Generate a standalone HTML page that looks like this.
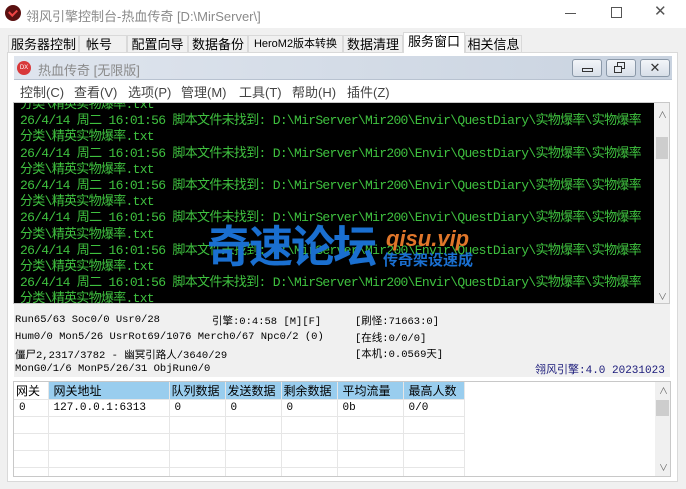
<!DOCTYPE html>
<html><head><meta charset="utf-8"><style>
*{margin:0;padding:0;box-sizing:border-box}
body{width:686px;height:489px;background:#f0f0f0;font-family:"Liberation Sans","Noto Sans CJK SC",sans-serif;position:relative;overflow:hidden}
.a{position:absolute}
.title{left:0;top:0;width:686px;height:28px;background:#fff}
.tab{position:absolute;top:35px;height:18px;border:1px solid #d9d9d9;border-bottom:none;background:#f0f0f0;font-size:13px;line-height:17px;text-align:center;color:#000}
.mono{font-family:"Liberation Mono","Noto Sans CJK SC",monospace}
.con{left:14px;top:103px;width:640px;height:200px;background:#000;overflow:hidden}
.con div{font-size:13px;line-height:16.2px;color:#3fc13f;white-space:nowrap;padding-left:6px;font-family:"Liberation Mono","Noto Sans CJK SC",monospace;letter-spacing:-0.7px}
.st{font-size:10.5px;color:#000;font-family:"Liberation Mono","Noto Sans CJK SC",monospace;white-space:nowrap}
table{border-collapse:collapse;font-size:11px}
td{border-right:1px solid #e6e6e6;border-bottom:1px solid #e6e6e6;height:17px;padding-left:5px;white-space:nowrap}
.btn{position:absolute;top:59px;width:30px;height:18px;border:1px solid #8a98a8;border-radius:3px;background:linear-gradient(#f2f5f9,#d8dfe8)}
.m{position:absolute;top:82px;font-size:13px;color:#444;white-space:nowrap}
</style></head><body>
<div class="a title"></div>
<div class="a" style="left:5px;top:5px;width:16px;height:16px;border-radius:50%;background:#5a1010"></div>
<div class="a" style="left:9px;top:9px;width:8px;height:6px;border-left:2px solid #e44;border-bottom:2px solid #e44;transform:rotate(-45deg)"></div>
<div class="a" style="left:26px;top:6px;font-size:13px;color:#8a8a8a">翎风引擎控制台-热血传奇 [D:\MirServer\]</div>
<div class="a" style="left:565px;top:13px;width:11px;height:1px;background:#555"></div>
<div class="a" style="left:611px;top:7px;width:11px;height:11px;border:1px solid #555"></div>
<div class="a" style="left:654px;top:2px;font-size:15px;color:#555">✕</div>

<div class="tab" style="left:8px;width:71px">服务器控制</div>
<div class="tab" style="left:79px;width:48px;text-align:left;padding-left:6px">帐号</div>
<div class="tab" style="left:127px;width:61px">配置向导</div>
<div class="tab" style="left:188px;width:60px">数据备份</div>
<div class="tab" style="left:248px;width:95px;font-size:11px">HeroM2版本转换</div>
<div class="tab" style="left:343px;width:60px">数据清理</div>
<div class="tab" style="left:403px;width:62px;top:32px;height:21px;background:#fff;z-index:2">服务窗口</div>
<div class="tab" style="left:465px;width:57px">相关信息</div>

<div class="a" style="left:7px;top:52px;width:671px;height:430px;background:#fff;border:1px solid #d9d9d9"></div>
<div class="a" style="left:14px;top:56px;width:658px;height:24px;background:linear-gradient(90deg,#dfe5ee,#c9d3e0);border-bottom:1px solid #b8c2d0"></div>
<div class="a" style="left:17px;top:61px;width:14px;height:14px;border-radius:50%;background:#d8383a;color:#fff;font-size:6px;line-height:14px;text-align:center">DX</div>
<div class="a" style="left:38px;top:60px;font-size:13px;color:#8a8a8a">热血传奇 [无限版]</div>
<div class="btn" style="left:572px"><div class="a" style="left:9px;top:8px;width:11px;height:4px;border:1px solid #333"></div></div>
<div class="btn" style="left:606px"><div class="a" style="left:10px;top:2px;width:8px;height:7px;border:1px solid #333"></div><div class="a" style="left:7px;top:6px;width:8px;height:7px;border:1px solid #333;background:#e8ecf2"></div></div>
<div class="btn" style="left:640px;font-size:13px;text-align:center;line-height:16px;color:#333">✕</div>
<div class="a" style="left:14px;top:80px;width:658px;height:22px;background:#fff"></div>
<div class="m" style="left:20px">控制(C)</div>
<div class="m" style="left:74px">查看(V)</div>
<div class="m" style="left:128px">选项(P)</div>
<div class="m" style="left:181px">管理(M)</div>
<div class="m" style="left:239px">工具(T)</div>
<div class="m" style="left:292px">帮助(H)</div>
<div class="m" style="left:347px">插件(Z)</div>

<div class="a" style="left:13px;top:102px;width:657px;height:202px;border:1px solid #c8c8c8;background:#f0f0f0"></div>
<div class="a con"><div style="margin-top:-6px">分类\精英实物爆率.txt</div>
<div>26/4/14 周二 16:01:56 脚本文件未找到: D:\MirServer\Mir200\Envir\QuestDiary\实物爆率\实物爆率</div><div>分类\精英实物爆率.txt</div>
<div>26/4/14 周二 16:01:56 脚本文件未找到: D:\MirServer\Mir200\Envir\QuestDiary\实物爆率\实物爆率</div><div>分类\精英实物爆率.txt</div>
<div>26/4/14 周二 16:01:56 脚本文件未找到: D:\MirServer\Mir200\Envir\QuestDiary\实物爆率\实物爆率</div><div>分类\精英实物爆率.txt</div>
<div>26/4/14 周二 16:01:56 脚本文件未找到: D:\MirServer\Mir200\Envir\QuestDiary\实物爆率\实物爆率</div><div>分类\精英实物爆率.txt</div>
<div>26/4/14 周二 16:01:56 脚本文件未找到: D:\MirServer\Mir200\Envir\QuestDiary\实物爆率\实物爆率</div><div>分类\精英实物爆率.txt</div>
<div>26/4/14 周二 16:01:56 脚本文件未找到: D:\MirServer\Mir200\Envir\QuestDiary\实物爆率\实物爆率</div><div>分类\精英实物爆率.txt</div></div>
<div class="a" style="left:656px;top:137px;width:12px;height:22px;background:#cdcdcd"></div>
<div class="a" style="left:658px;top:108px;font-size:9px;color:#666">∧</div>
<div class="a" style="left:658px;top:290px;font-size:9px;color:#666">∨</div>

<div class="a" style="left:207px;top:222px;font-size:44px;font-weight:bold;color:#1a6fd0;letter-spacing:-2px;line-height:52px">奇速论坛</div>
<div class="a" style="left:386px;top:226px;font-size:22px;font-weight:bold;font-style:italic;color:#e0762a;line-height:26px">qisu.vip</div>
<div class="a" style="left:383px;top:252px;font-size:15px;font-weight:bold;color:#1a6fd0;line-height:18px">传奇架设速成</div>

<div class="a" style="left:14px;top:304px;width:656px;height:73px;background:#f0f0f0"></div>
<div class="a st" style="left:15px;top:314px">Run65/63 Soc0/0 Usr0/28</div>
<div class="a st" style="left:212px;top:313px">引擎:0:4:58 [M][F]</div>
<div class="a st" style="left:355px;top:313px">[刷怪:71663:0]</div>
<div class="a st" style="left:15px;top:331px">Hum0/0 Mon5/26 UsrRot69/1076 Merch0/67 Npc0/2 (0)</div>
<div class="a st" style="left:355px;top:330px">[在线:0/0/0]</div>
<div class="a st" style="left:15px;top:347px">僵尸2,2317/3782 - 幽冥引路人/3640/29</div>
<div class="a st" style="left:355px;top:346px">[本机:0.0569天]</div>
<div class="a st" style="left:15px;top:363px">MonG0/1/6 MonP5/26/31 ObjRun0/0</div>
<div class="a st" style="left:535px;top:361px;color:#1a1a7a;font-size:11px">翎风引擎:4.0 20231023</div>

<div class="a" style="left:13px;top:381px;width:658px;height:96px;border:1px solid #c8c8c8;background:#fff;overflow:hidden">
<table>
<tr style="height:17px"><td style="width:34px;background:#fff;font-size:12px;padding-left:2px">网关</td><td style="width:121px;background:#99cdee;font-size:12px">网关地址</td><td style="width:56px;background:#99cdee;font-size:12px;padding-left:2px">队列数据</td><td style="width:56px;background:#99cdee;font-size:12px;padding-left:2px">发送数据</td><td style="width:56px;background:#99cdee;font-size:12px;padding-left:2px">剩余数据</td><td style="width:66px;background:#99cdee;font-size:12px">平均流量</td><td style="width:61px;background:#99cdee;font-size:12px">最高人数</td></tr>
<tr class="mono"><td>0</td><td>127.0.0.1:6313</td><td>0</td><td>0</td><td>0</td><td>0b</td><td>0/0</td></tr>
<tr><td></td><td></td><td></td><td></td><td></td><td></td><td></td></tr>
<tr><td></td><td></td><td></td><td></td><td></td><td></td><td></td></tr>
<tr><td></td><td></td><td></td><td></td><td></td><td></td><td></td></tr>
<tr><td></td><td></td><td></td><td></td><td></td><td></td><td></td></tr>
</table></div>
<div class="a" style="left:655px;top:382px;width:15px;height:94px;background:#f0f0f0"></div>
<div class="a" style="left:656px;top:400px;width:13px;height:16px;background:#cdcdcd"></div>
<div class="a" style="left:659px;top:384px;font-size:9px;color:#666">∧</div>
<div class="a" style="left:659px;top:461px;font-size:9px;color:#666">∨</div>
</body></html>
